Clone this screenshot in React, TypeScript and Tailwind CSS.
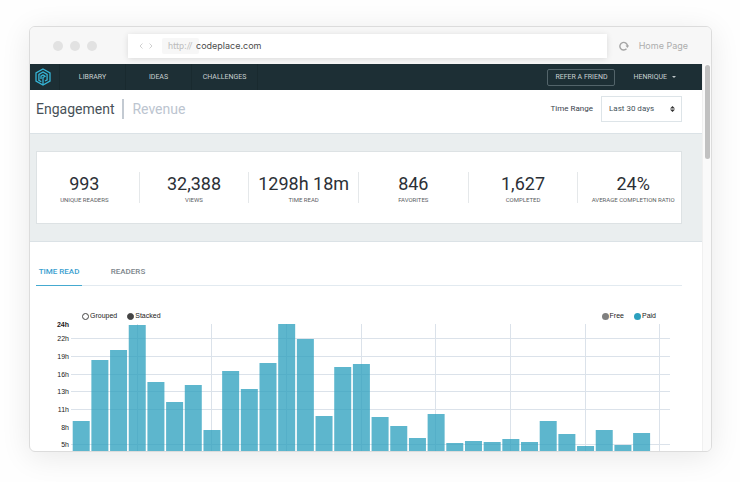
import { useState } from "react";

const stats = [
  { value: "993", label: "UNIQUE READERS" },
  { value: "32,388", label: "VIEWS" },
  { value: "1298h 18m", label: "TIME READ" },
  { value: "846", label: "FAVORITES" },
  { value: "1,627", label: "COMPLETED" },
  { value: "24%", label: "AVERAGE COMPLETION RATIO" },
];

// Height of each day's bar, measured up from the 5h line.
const days = [
  24, 85, 95, 120, 63, 43, 60, 15, 74, 56, 82, 121, 106, 29, 78, 81, 28, 19, 7, 31, 2, 4, 3, 6, 3,
  24, 11, -1, 15, 0, 12,
];

const hours = [
  { label: "24h", y: 9, line: false },
  { label: "22h", y: 23, line: true },
  { label: "19h", y: 41, line: true },
  { label: "16h", y: 59, line: true },
  { label: "13h", y: 76, line: true },
  { label: "11h", y: 94, line: true },
  { label: "8h", y: 112, line: false },
  { label: "5h", y: 129, line: true },
];

const weeks = [107, 181, 256, 331, 405, 480, 555, 629];

function Logo() {
  return (
    <svg viewBox="0 0 16 18" className="h-[18px] w-4" fill="none" stroke="#35b4d6" strokeWidth="1.3" aria-hidden="true">
      <path d="M8 1 15 5v8l-7 4-7-4V5z" />
      <path d="M6.300 13.800 3.900 12.300V6.400L8 4l4.100 2.400v5.400L10 13" />
      <path d="M6 11V8.200L8 7l2 1.200-2 1.300V17" />
    </svg>
  );
}

function BrowserBar() {
  return (
    <header className="flex h-[37px] shrink-0 items-center bg-[#f7f7f7] px-[23px] font-['Lato',sans-serif] text-[9px]">
      <div className="flex w-[75px] shrink-0 gap-[7px]">
        <span className="size-[10px] rounded-full bg-[#e2e2e2]" />
        <span className="size-[10px] rounded-full bg-[#e2e2e2]" />
        <span className="size-[10px] rounded-full bg-[#e2e2e2]" />
      </div>
      <div className="flex h-6 flex-1 items-center bg-white pl-2 shadow-[0_1px_6px_rgba(0,0,0,0.12)]">
        <button aria-label="Back" className="flex w-[10px] justify-center">
          <svg viewBox="0 0 4 6" className="h-[6px] w-1" fill="none" stroke="#d0d0d0"><path d="M3.500.5 1 3l2.500 2.500" /></svg>
        </button>
        <button aria-label="Forward" className="flex w-[10px] justify-center">
          <svg viewBox="0 0 4 6" className="h-[6px] w-1" fill="none" stroke="#d0d0d0"><path d="M.5.5 3 3 .5 5.500" /></svg>
        </button>
        <div className="ml-[6px] flex h-4 w-[37px] items-center rounded-xs bg-[#f7f7f7] pl-[6px] text-[#bdbdbd]">http://</div>
        <input
          aria-label="Address"
          defaultValue="codeplace.com"
          className="-ml-[3px] min-w-0 flex-1 font-['Inter',sans-serif] text-[#4c4c4c] outline-none"
        />
      </div>
      <button aria-label="Reload" className="ml-3 mr-[10px] flex">
        <svg viewBox="0 0 10 10" className="size-[10px]" fill="none" stroke="#a5a5a5" strokeWidth="1.400">
          <path d="M7.500 7.800A3.800 3.800 0 1 1 8.500 5" />
          <path d="M6.500 4.600H10.200L8.400 7z" fill="#a5a5a5" stroke="none" />
        </svg>
      </button>
      <a href="#home" className="font-['Inter',sans-serif] text-[#adadad]">Home Page</a>
    </header>
  );
}

function NavBar() {
  return (
    <nav className="flex h-[26px] items-center bg-[#1d2f35] pr-[26px] text-[7px] text-[#c8cfd1]">
      <a href="#top" aria-label="Codeplace" className="flex h-full w-[30px] items-center border-r border-[#192a2f] pl-[5px]">
        <Logo />
      </a>
      <a href="#library" className="flex h-full w-[66px] items-center justify-center border-r border-[#192a2f]">LIBRARY</a>
      <a href="#ideas" className="flex h-full w-[66px] items-center justify-center border-r border-[#192a2f]">IDEAS</a>
      <a href="#challenges" className="flex h-full w-[66px] items-center justify-center border-r border-[#192a2f]">CHALLENGES</a>
      <button className="ml-auto h-[17px] w-[68px] rounded-xs border border-[#53646a]">REFER A FRIEND</button>
      <button className="ml-[18px] flex items-center gap-[5px]">
        HENRIQUE
        <svg viewBox="0 0 4 2" className="h-[2px] w-1" fill="#c0c7c9"><path d="M0 0h4L2 2z" /></svg>
      </button>
    </nav>
  );
}

function Heading() {
  return (
    <div className="flex h-[43px] items-center pb-[6px] pl-[6px] pr-5">
      <h1 className="border-r-2 border-[#c3cad2] pr-2 text-[14px] leading-5 text-[#475158]">Engagement</h1>
      <a href="#revenue" className="pl-2 text-[14px] leading-5 text-[#bcc5d0]">Revenue</a>
      <label htmlFor="range" className="ml-auto mr-2 text-[8px] text-[#39424c]">Time Range</label>
      <div className="relative">
        <select id="range" className="block h-[26px] w-[81px] appearance-none border border-[#dde4e8] bg-white pl-[7px] text-[8px] text-[#45525a]">
          <option>Last 30 days</option>
        </select>
        <svg viewBox="0 0 5 6" className="pointer-events-none absolute right-[7px] top-[10px] h-[6px] w-[5px]" fill="#333">
          <path d="M0 2.500 2.500 0 5 2.500zM0 3.500h5L2.500 6z" />
        </svg>
      </div>
    </div>
  );
}

function Stats() {
  return (
    <section className="border-y border-[#dbe2e6] bg-[#eaeeef] py-[17px] pl-[6px] pr-5">
      <div className="border border-[#dde2e4] bg-white py-5">
        <dl className="-mx-[7px] grid grid-cols-6 divide-x divide-[#e5e8ea]">
          {stats.map((s) => (
            <div key={s.label} className="flex h-[31px] flex-col-reverse items-center justify-center whitespace-nowrap">
              <dt className="text-[6px] leading-2 text-[#5b6063]">{s.label}</dt>
              <dd className="text-[18px] leading-6 text-[#2c3036]">{s.value}</dd>
            </div>
          ))}
        </dl>
      </div>
    </section>
  );
}

function Chart() {
  return (
    <svg viewBox="0 5 672 155" className="block w-full font-['Liberation_Sans',Arial,sans-serif] text-[7px]" role="img" aria-label="Time read per day">
      <g stroke="#dbe2ea">
        {hours.filter((h) => h.line).map((h) => (
          <path key={h.label} d={`M41 ${h.y + 0.5}H640`} />
        ))}
        {weeks.map((x) => (
          <path key={x} d={`M${x + 0.5} 9V160`} />
        ))}
      </g>
      <g fill="#2ca0be" fillOpacity="0.77">
        {days.map((d, i) => (
          <rect key={i} x={42.700 + i * 18.680} y={130 - d} width="17" height={30 + d} />
        ))}
      </g>
      <g fill="#222" textAnchor="end">
        {hours.map((h) => (
          <text key={h.label} x="39" y={h.y + 3} fontWeight={h.label === "24h" ? 700 : 400}>{h.label}</text>
        ))}
      </g>
    </svg>
  );
}

function Report() {
  const [tab, setTab] = useState("TIME READ");
  const [mode, setMode] = useState("Stacked");
  return (
    <section>
      <div className="ml-[6px] mr-5 flex border-b border-[#e2eaf0] pt-[17px] text-[8px] font-medium">
        {["TIME READ", "READERS"].map((t) => (
          <button
            key={t}
            onClick={() => setTab(t)}
            className={`-mb-px mr-[23px] h-[27px] w-[46px] border-b whitespace-nowrap ${
              t === tab ? "border-[#45aad0] text-[#3b9fd0]" : "border-transparent text-[#7c858b]"
            }`}
          >
            {t}
          </button>
        ))}
      </div>
      <div className="flex items-center justify-between pl-[52px] pr-[46px] pt-[26px] font-['Liberation_Sans',Arial,sans-serif] text-[7px] leading-2 text-[#222]">
        <div className="flex gap-[10px]">
          {["Grouped", "Stacked"].map((m) => (
            <label key={m} className="flex items-center gap-px">
              <input
                type="radio"
                name="mode"
                checked={mode === m}
                onChange={() => setMode(m)}
                className="size-[7px] appearance-none rounded-full border border-[#444] checked:bg-[#444]"
              />
              {m}
            </label>
          ))}
        </div>
        <div className="flex gap-[10px]">
          <span className="flex items-center gap-px"><i className="size-[7px] rounded-full bg-[#808080]" />Free</span>
          <span className="flex items-center gap-px"><i className="size-[7px] rounded-full bg-[#2ca0be]" />Paid</span>
        </div>
      </div>
      <Chart />
    </section>
  );
}

export default function App() {
  return (
    <div className="flex h-screen bg-[#fefefe] pb-[30px] pl-[29px] pr-7 pt-[26px] font-['Roboto',sans-serif]">
      <div className="flex min-w-0 flex-1 flex-col overflow-hidden rounded-md border border-[#dcdcdc] bg-white shadow-[0_5px_30px_rgba(0,0,0,0.09)]">
        <BrowserBar />
        <div className="flex min-h-0 flex-1">
          <main className="min-w-0 flex-1 overflow-hidden">
            <NavBar />
            <Heading />
            <Stats />
            <Report />
          </main>
          <div className="w-[9px] border-l border-[#f0f0f0] bg-[#fafafa] pl-[2px] pt-px">
            <div className="h-[94px] w-[5px] rounded-full bg-[#c1c1c1]" />
          </div>
        </div>
      </div>
    </div>
  );
}
